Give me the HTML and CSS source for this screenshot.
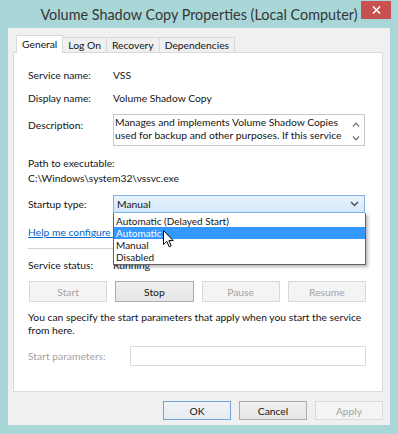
FILE: index.html
```html
<!DOCTYPE html>
<html>
<head>
<meta charset="utf-8">
<link rel="stylesheet" href="styles.css">
</head>
<body>
<div class="window">
  <div class="titlebar">
    <div class="title">Volume Shadow Copy Properties (Local Computer)</div>
    <div class="close">
      <svg width="9" height="8" viewBox="0 0 9 8"><path d="M1 0.5 L8 7.5 M8 0.5 L1 7.5" stroke="#fff" stroke-width="1.6"/></svg>
    </div>
  </div>
  <div class="client">
    <div class="tabs">
      <div class="tab active">General</div>
      <div class="tab">Log On</div>
      <div class="tab">Recovery</div>
      <div class="tab">Dependencies</div>
    </div>
    <div class="panel">
      <div class="field">
        <span class="label">Service name:</span><span>VSS</span>
      </div>
      <div class="field gap8">
        <span class="label">Display name:</span><span>Volume Shadow Copy</span>
      </div>
      <div class="field gap8">
        <span class="label desc-label">Description:</span>
        <div class="desc">
          <div class="desc-text">
            <span class="line">Manages and implements Volume Shadow Copies</span>
            <span class="line">used for backup and other purposes. If this service</span>
          </div>
          <div class="scroll">
            <svg width="8" height="5" viewBox="0 0 8 5"><path d="M1 4.5 L4 1.2 L7 4.5" fill="none" stroke="#6d6d6d" stroke-width="1.2"/></svg>
            <svg width="8" height="5" viewBox="0 0 8 5"><path d="M1 0.5 L4 3.8 L7 0.5" fill="none" stroke="#6d6d6d" stroke-width="1.2"/></svg>
          </div>
        </div>
      </div>
      <div class="path-label">Path to executable:</div>
      <div class="path">C:\Windows\system32\vssvc.exe</div>
      <div class="field startup">
        <span class="label">Startup type:</span>
        <div class="combo-wrap">
          <div class="combo">
            <span>Manual</span>
            <svg width="9" height="6" viewBox="0 0 9 6"><path d="M1 1 L4.5 4.5 L8 1" fill="none" stroke="#505050" stroke-width="1.5"/></svg>
          </div>
          <div class="list">
            <div class="item">Automatic (Delayed Start)</div>
            <div class="item selected">Automatic</div>
            <div class="item">Manual</div>
            <div class="item">Disabled</div>
            <svg class="cursor" width="11" height="18" viewBox="0 0 11 18"><path d="M0.5 0.5 L0.5 14.5 L3.8 11.4 L6.2 16.8 L8.2 15.9 L5.9 10.6 L10.2 10.6 Z" fill="#fff" stroke="#000" stroke-width="1" stroke-linejoin="round"/></svg>
          </div>
        </div>
      </div>
      <a class="help" href="#">Help me configure service startup options.</a>
      <div class="sep"></div>
      <div class="field status">
        <span class="label">Service status:</span><span>Running</span>
      </div>
      <div class="svc-buttons">
        <div class="btn disabled">Start</div>
        <div class="btn">Stop</div>
        <div class="btn disabled">Pause</div>
        <div class="btn disabled">Resume</div>
      </div>
      <p class="note">You can specify the start parameters that apply when you start the service<br>from here.</p>
      <div class="field params">
        <span class="label params-label">Start parameters:</span>
        <div class="input"></div>
      </div>
    </div>
    <div class="footer">
      <div class="btn default">OK</div>
      <div class="btn">Cancel</div>
      <div class="btn disabled">Apply</div>
    </div>
  </div>
</div>
</body>
</html>
```

FILE: styles.css
```css
html, body {
  margin: 0;
  padding: 0;
}
body {
  background: #a9d6d7;
  font-family: Lato, "Noto Sans", sans-serif;
  font-size: 10.3px;
  color: #141414;
}
.window {
  width: 398px;
  height: 434px;
  background: #a9d6d7;
  display: flex;
  flex-direction: column;
}
.titlebar {
  height: 28px;
  display: grid;
  grid-template-columns: 1fr auto 1fr;
}
.title {
  grid-column: 2;
  align-self: center;
  font-size: 14.4px;
  color: #363636;
  white-space: nowrap;
  padding-top: 1px;
}
.close {
  grid-column: 3;
  justify-self: end;
  align-self: start;
  margin: 1px 7px 0 0;
  width: 30px;
  height: 18px;
  background: #c75050;
  display: flex;
  align-items: center;
  justify-content: center;
}
.client {
  margin: 0 8px 9px 8px;
  height: 397px;
  background: #f0f0f0;
  padding: 7px 7px 0 5px;
  box-sizing: border-box;
}
.tabs {
  display: flex;
  align-items: flex-end;
  height: 17px;
  padding-left: 3px;
  position: relative;
  z-index: 1;
}
.tab {
  height: 15px;
  line-height: 14px;
  box-sizing: border-box;
  border: 1px solid #d9d9d9;
  border-bottom: none;
  background: #f0f0f0;
  padding: 0 5px;
  margin-right: -1px;
  white-space: nowrap;
}
.tab.active {
  height: 18px;
  line-height: 16px;
  padding: 0 5px;
  background: #fff;
  margin-bottom: -1px;
  position: relative;
  z-index: 1;
}
.panel {
  height: 340px;
  background: #fff;
  border: 1px solid #d9d9d9;
  box-sizing: border-box;
  padding: 15px 16px 0 14px;
}
.field {
  display: flex;
  line-height: 15px;
  white-space: nowrap;
}
.gap8 {
  margin-top: 8px;
}
.label {
  width: 85px;
  flex: none;
}
.desc-label {
  padding-top: 4px;
}
.desc {
  width: 252px;
  height: 32px;
  box-sizing: border-box;
  border: 1px solid #c5c7cc;
  display: flex;
  overflow: hidden;
}
.desc-text {
  flex: 1;
  padding: 1px 0 0 1px;
  line-height: 12.5px;
}
.line {
  display: block;
  white-space: nowrap;
}
.scroll {
  width: 17px;
  flex: none;
  display: flex;
  flex-direction: column;
  align-items: center;
  gap: 9px;
  padding-top: 7px;
}
.scroll svg {
  display: block;
}
.path-label {
  margin-top: 10px;
  line-height: 15px;
}
.path {
  line-height: 15px;
}
.startup {
  margin-top: 9px;
  line-height: 18px;
}
.combo-wrap {
  position: relative;
  z-index: 2;
  width: 253px;
}
.combo {
  height: 18px;
  width: 252px;
  box-sizing: border-box;
  border: 1px solid #7eb4ea;
  background: linear-gradient(#eaf4fd, #d3e8fc);
  display: flex;
  align-items: center;
  justify-content: space-between;
  padding: 0 5px 0 3px;
  line-height: 16px;
}
.list {
  position: absolute;
  top: 18px;
  left: 0;
  width: 253px;
  box-sizing: border-box;
  background: #fff;
  border: 1px solid #646464;
  border-top: none;
  padding: 2px 0 1px 0;
  box-shadow: 2px 2px 3px rgba(0, 0, 0, 0.28);
}
.item {
  height: 12px;
  line-height: 12px;
  padding-left: 2px;
  font-size: 10px;
}
.item.selected {
  background: #3399ff;
  color: #fff;
}
.cursor {
  position: absolute;
  left: 49px;
  top: 17px;
}
.help {
  display: block;
  margin-top: 12px;
  line-height: 15px;
  color: #0066cc;
  text-decoration: underline;
  white-space: nowrap;
}
.sep {
  margin-top: 8px;
  height: 1px;
  background: #d0d0d0;
}
.status {
  margin-top: 9px;
}
.svc-buttons {
  margin-top: 8px;
  margin-left: 1px;
  display: grid;
  grid-template-columns: repeat(4, 1fr);
  gap: 8px;
}
.btn {
  height: 21px;
  box-sizing: border-box;
  border: 1px solid #acacac;
  background: linear-gradient(#f0f0f0, #e5e5e5);
  display: flex;
  align-items: center;
  justify-content: center;
  color: #141414;
}
.btn.disabled {
  border-color: #d9d9d9;
  background: #f4f4f4;
  color: #a3a3a3;
}
.btn.default {
  border-color: #6fa5dc;
  background: linear-gradient(#f0f3f6, #e5ecf2);
}
.note {
  margin: 9px 0 0 0;
  line-height: 13px;
  white-space: nowrap;
}
.params {
  margin-top: 9px;
  line-height: 20px;
}
.params-label {
  width: 102px;
  color: #a3a3a3;
}
.input {
  width: 236px;
  height: 20px;
  box-sizing: border-box;
  border: 1px solid #d9d9d9;
  background: #fff;
}
.footer {
  margin-top: 9px;
  display: flex;
  justify-content: flex-end;
  gap: 8px;
}
.footer .btn {
  width: 68px;
  height: 19px;
}
```
